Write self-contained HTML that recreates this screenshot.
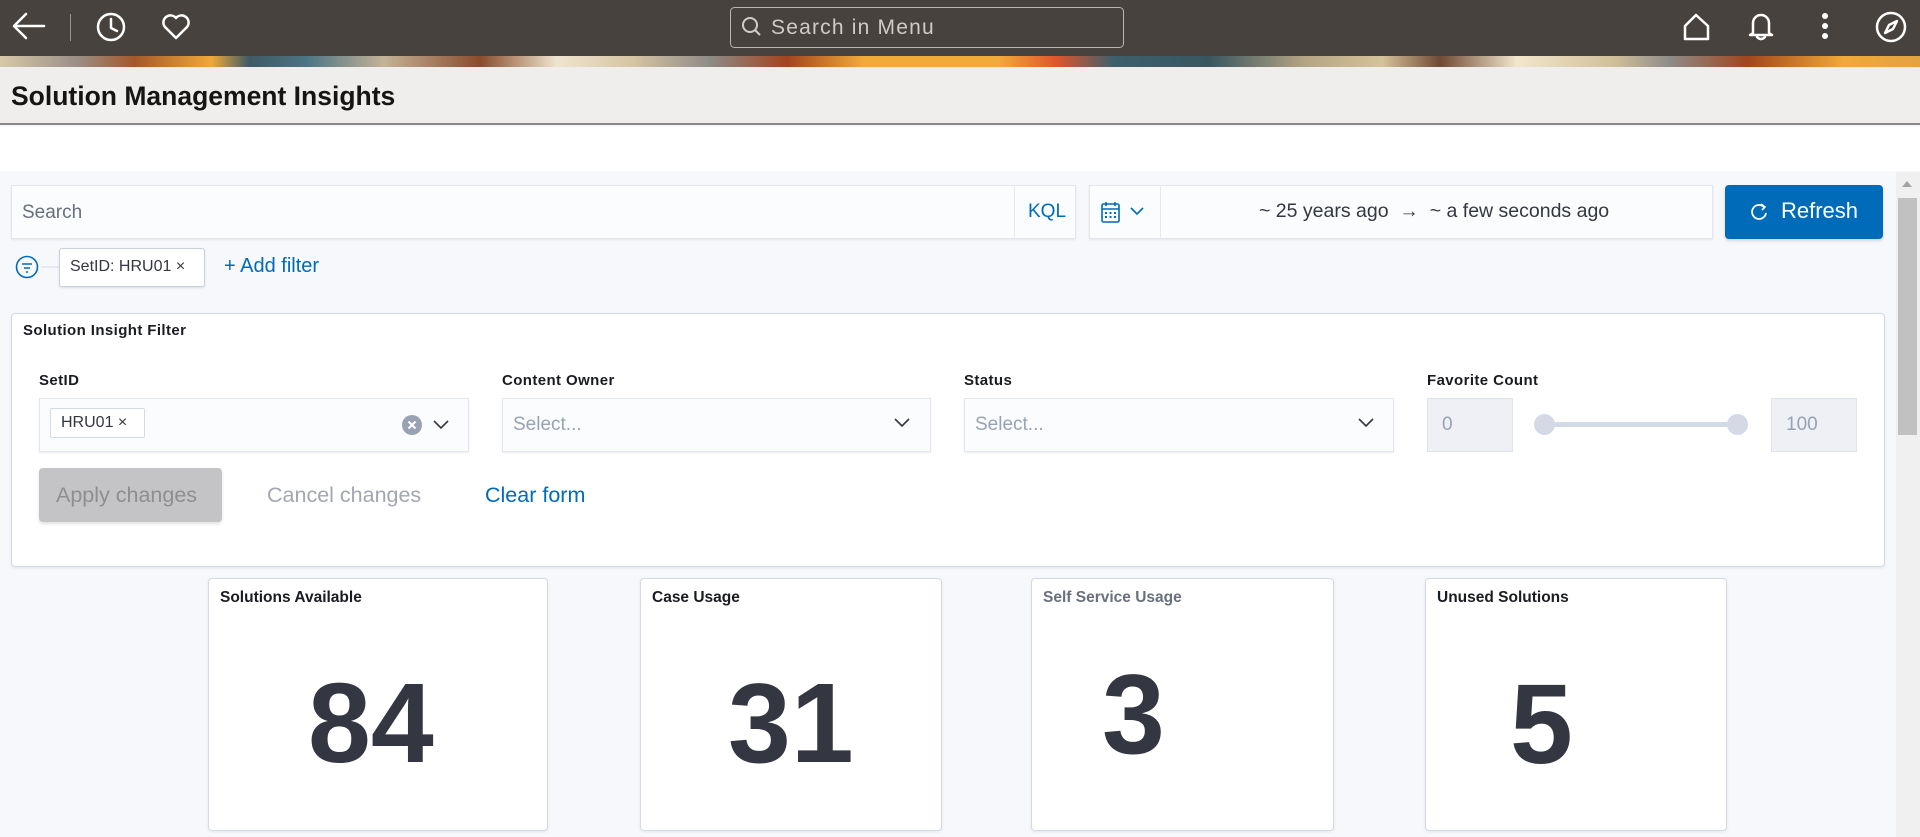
<!DOCTYPE html>
<html><head><meta charset="utf-8">
<style>
*{box-sizing:border-box;margin:0;padding:0}
body{width:1920px;height:837px;overflow:hidden;background:#f7f8fc;font-family:"Liberation Sans",Arial,sans-serif;position:relative}
.a{position:absolute}
.hdr{left:0;top:0;width:1920px;height:56px;background:#47423e}
.banner{left:0;top:56px;width:1920px;height:11px;background:linear-gradient(90deg,#d8c9a9 0,#9a8f86 4%,#a4582a 7%,#f0a83a 11%,#3e5a66 13%,#4c7584 16%,#c4b297 20%,#8a4b2c 25%,#efe5cf 29%,#d6c4a2 33%,#8d8a86 37%,#a3441f 41%,#f2aa3a 45%,#f2aa3a 52%,#e0562c 55%,#3d5f6c 58%,#395660 63%,#b6a584 68%,#d6c29a 72%,#6f4a35 75%,#f2e6cd 79%,#d2c09a 84%,#8e8b88 87%,#a1461d 91%,#f0a83a 96%,#e4a240 100%)}
.titlebar{left:0;top:67px;width:1920px;height:58px;background:#f0eeec;border-bottom:2px solid #8a8785}
.title{left:11px;top:81px;font-size:26.5px;font-weight:bold;color:#161513}
.white{left:0;top:127px;width:1920px;height:44px;background:#fff}
.box{background:#fbfcfd;border:1px solid #e3e6ee;box-shadow:0 1px 2px rgba(0,0,0,.08)}
.lbl{font-size:15px;font-weight:bold;color:#1a1c21;letter-spacing:.4px}
.card{background:#fff;border:1px solid #d3dae6;border-radius:4px;box-shadow:0 1px 3px rgba(0,0,0,.08)}
.ct{font-size:15.5px;font-weight:bold;color:#1a1c21;left:11px;top:10px}
.num{font-size:113px;font-weight:bold;color:#343741;line-height:1}
</style></head><body>
<div class="a hdr"></div>
<div class="a banner"></div>
<svg class="a" style="left:0;top:0" width="1920" height="56">
<g fill="none" stroke="#fff" stroke-width="2.5" stroke-linecap="round" stroke-linejoin="round">
<path d="M14 26H44M26 14L14 26L26 38"/>
<circle cx="111" cy="27" r="13"/><path d="M111 19V28L117 31"/>
<path d="M176 38L165 27A6.5 6.5 0 0 1 176 18A6.5 6.5 0 0 1 187 27Z"/>
<path d="M1685 39V26L1696 15L1708 26V39Z"/>
<path d="M1753 33V23A8 8 0 0 1 1769 23V33L1772 35H1750Z"/><path d="M1757 37Q1761 41 1765 37"/>
<circle cx="1891" cy="27" r="14"/><path d="M1885 33L1889 25L1897 21L1893 29Z"/>
</g>
<line x1="70.5" y1="14" x2="70.5" y2="41" stroke="#9a9591" stroke-width="1"/>
<g fill="#fff"><circle cx="1825" cy="16" r="3"/><circle cx="1825" cy="26" r="3"/><circle cx="1825" cy="36" r="3"/></g>
<rect x="730.5" y="7.5" width="393" height="40" rx="4" fill="none" stroke="#bcb7b2"/>
<circle cx="750" cy="25" r="7" fill="none" stroke="#d0ccc8" stroke-width="2"/><path d="M755 30L760 35" stroke="#d0ccc8" stroke-width="2"/>
<text x="771" y="34" font-family="Liberation Sans,Arial,sans-serif" font-size="21" letter-spacing="1.2" fill="#cfcbc7">Search in Menu</text>
</svg>
<div class="a titlebar"></div>
<div class="a title">Solution Management Insights</div>
<div class="a white"></div>
<div class="a" style="left:1896px;top:172px;width:24px;height:665px;background:#f0f0f0"></div>
<div class="a" style="left:1898px;top:198px;width:19px;height:237px;background:#c1c1c1"></div>
<div class="a" style="left:1902px;top:181px;width:0;height:0;border-left:5px solid transparent;border-right:5px solid transparent;border-bottom:6px solid #a3a3a3"></div>
<div class="a box" style="left:11px;top:185px;width:1065px;height:54px"></div>
<div class="a" style="left:1014px;top:186px;width:1px;height:52px;background:#e6e9ef"></div>
<div class="a" style="left:22px;top:202px;font-size:19px;color:#69707d">Search</div>
<div class="a" style="left:1028px;top:201px;font-size:19px;color:#006bb8">KQL</div>
<div class="a box" style="left:1089px;top:185px;width:624px;height:54px"></div>
<div class="a" style="left:1160px;top:186px;width:1px;height:52px;background:#e6e9ef"></div>
<svg class="a" style="left:1100px;top:200px" width="50" height="26"><g fill="none" stroke="#006bb8" stroke-width="1.6"><rect x="2" y="4" width="17" height="18" rx="1.5"/><path d="M2 9H19M6 2V6M15 2V6"/><path d="M31 8L37 14L43 8"/></g><g fill="#006bb8"><rect x="5" y="12" width="2" height="2"/><rect x="9.5" y="12" width="2" height="2"/><rect x="14" y="12" width="2" height="2"/><rect x="5" y="16" width="2" height="2"/><rect x="9.5" y="16" width="2" height="2"/><rect x="14" y="16" width="2" height="2"/></g></svg>
<div class="a" style="left:1259px;top:200px;font-size:19.5px;color:#343741">~ 25 years ago &nbsp;→ &nbsp;~ a few seconds ago</div>
<div class="a" style="left:1725px;top:185px;width:158px;height:54px;background:#006bb8;border-radius:4px;box-shadow:0 2px 3px rgba(0,0,0,.15)"></div>
<svg class="a" style="left:1748px;top:201px" width="22" height="22"><path d="M16 6A7 7 0 1 0 18 12" fill="none" stroke="#fff" stroke-width="1.8"/><path d="M13 3L17 6L14 9" fill="none" stroke="#fff" stroke-width="1.6"/></svg>
<div class="a" style="left:1781px;top:198px;font-size:22px;color:#fff">Refresh</div>
<svg class="a" style="left:14px;top:254px" width="48" height="28"><circle cx="13" cy="13" r="10.5" fill="none" stroke="#006bb8" stroke-width="1.6"/><path d="M8 10H18M10 14H16M12 18H14" stroke="#006bb8" stroke-width="1.6"/><path d="M27 13H45" stroke="#d3dae6"/></svg>
<div class="a" style="left:59px;top:248px;width:146px;height:39px;background:#fff;border:1px solid #c9d0dc;border-radius:3px;box-shadow:0 1px 2px rgba(0,0,0,.1)"></div>
<div class="a" style="left:70px;top:258px;font-size:16px;color:#343741">SetID: HRU01 ×</div>
<div class="a" style="left:224px;top:255px;font-size:20px;color:#006bb8">+ Add filter</div>
<div class="a" style="left:11px;top:313px;width:1874px;height:254px;background:#fff;border:1px solid #d3dae6;border-radius:4px;box-shadow:0 1px 3px rgba(0,0,0,.08)"></div>
<div class="a" style="left:23px;top:322px;font-size:15px;letter-spacing:.4px;font-weight:bold;color:#1a1c21">Solution Insight Filter</div>
<div class="a lbl" style="left:39px;top:372px">SetID</div>
<div class="a lbl" style="left:502px;top:372px">Content Owner</div>
<div class="a lbl" style="left:964px;top:372px">Status</div>
<div class="a lbl" style="left:1427px;top:372px">Favorite Count</div>
<div class="a box" style="left:39px;top:398px;width:430px;height:54px"></div>
<div class="a" style="left:50px;top:408px;width:95px;height:30px;background:#fff;border:1px solid #d3dae6;border-radius:2px"></div>
<div class="a" style="left:61px;top:414px;font-size:16px;color:#343741">HRU01 ×</div>
<svg class="a" style="left:400px;top:412px" width="56" height="26"><circle cx="12" cy="13" r="10" fill="#98a2b3"/><path d="M8.5 9.5L15.5 16.5M15.5 9.5L8.5 16.5" stroke="#fff" stroke-width="2"/><path d="M34 9L41 16L48 9" fill="none" stroke="#343741" stroke-width="1.6"/></svg>
<div class="a box" style="left:502px;top:398px;width:429px;height:54px"></div>
<div class="a" style="left:513px;top:414px;font-size:19px;color:#98a2b3">Select...</div>
<svg class="a" style="left:893px;top:415px" width="20" height="16"><path d="M2 4L9 11L16 4" fill="none" stroke="#343741" stroke-width="1.6"/></svg>
<div class="a box" style="left:964px;top:398px;width:430px;height:54px"></div>
<div class="a" style="left:975px;top:414px;font-size:19px;color:#98a2b3">Select...</div>
<svg class="a" style="left:1357px;top:415px" width="20" height="16"><path d="M2 4L9 11L16 4" fill="none" stroke="#343741" stroke-width="1.6"/></svg>
<div class="a" style="left:1427px;top:398px;width:86px;height:54px;background:#eef0f5;border:1px solid #dfe3ea"></div>
<div class="a" style="left:1442px;top:414px;font-size:19px;color:#98a2b3">0</div>
<div class="a" style="left:1544px;top:422px;width:195px;height:5px;background:#d3dae6;border-radius:2px"></div>
<div class="a" style="left:1534px;top:414px;width:21px;height:21px;border-radius:50%;background:#d3dae6"></div>
<div class="a" style="left:1727px;top:414px;width:21px;height:21px;border-radius:50%;background:#d3dae6"></div>
<div class="a" style="left:1771px;top:398px;width:86px;height:54px;background:#eef0f5;border:1px solid #dfe3ea"></div>
<div class="a" style="left:1786px;top:414px;font-size:19px;color:#98a2b3">100</div>
<div class="a" style="left:39px;top:468px;width:183px;height:54px;background:#c4c4c6;border-radius:4px;box-shadow:0 2px 3px rgba(0,0,0,.12)"></div>
<div class="a" style="left:56px;top:483px;font-size:21.5px;color:#8e8e91">Apply changes</div>
<div class="a" style="left:267px;top:483px;font-size:21.5px;color:#a2a7b0">Cancel changes</div>
<div class="a" style="left:485px;top:483px;font-size:21.5px;color:#006bb8">Clear form</div>
<div class="a card" style="left:208px;top:578px;width:340px;height:253px"><div class="a ct">Solutions Available</div><div class="a num" style="left:99px;top:88px">84</div></div>
<div class="a card" style="left:640px;top:578px;width:302px;height:253px"><div class="a ct">Case Usage</div><div class="a num" style="left:87px;top:88px">31</div></div>
<div class="a card" style="left:1031px;top:578px;width:303px;height:253px"><div class="a ct" style="color:#69707d">Self Service Usage</div><div class="a num" style="left:70px;top:79px">3</div></div>
<div class="a card" style="left:1425px;top:578px;width:302px;height:253px"><div class="a ct">Unused Solutions</div><div class="a num" style="left:84px;top:89px">5</div></div>
</body></html>
